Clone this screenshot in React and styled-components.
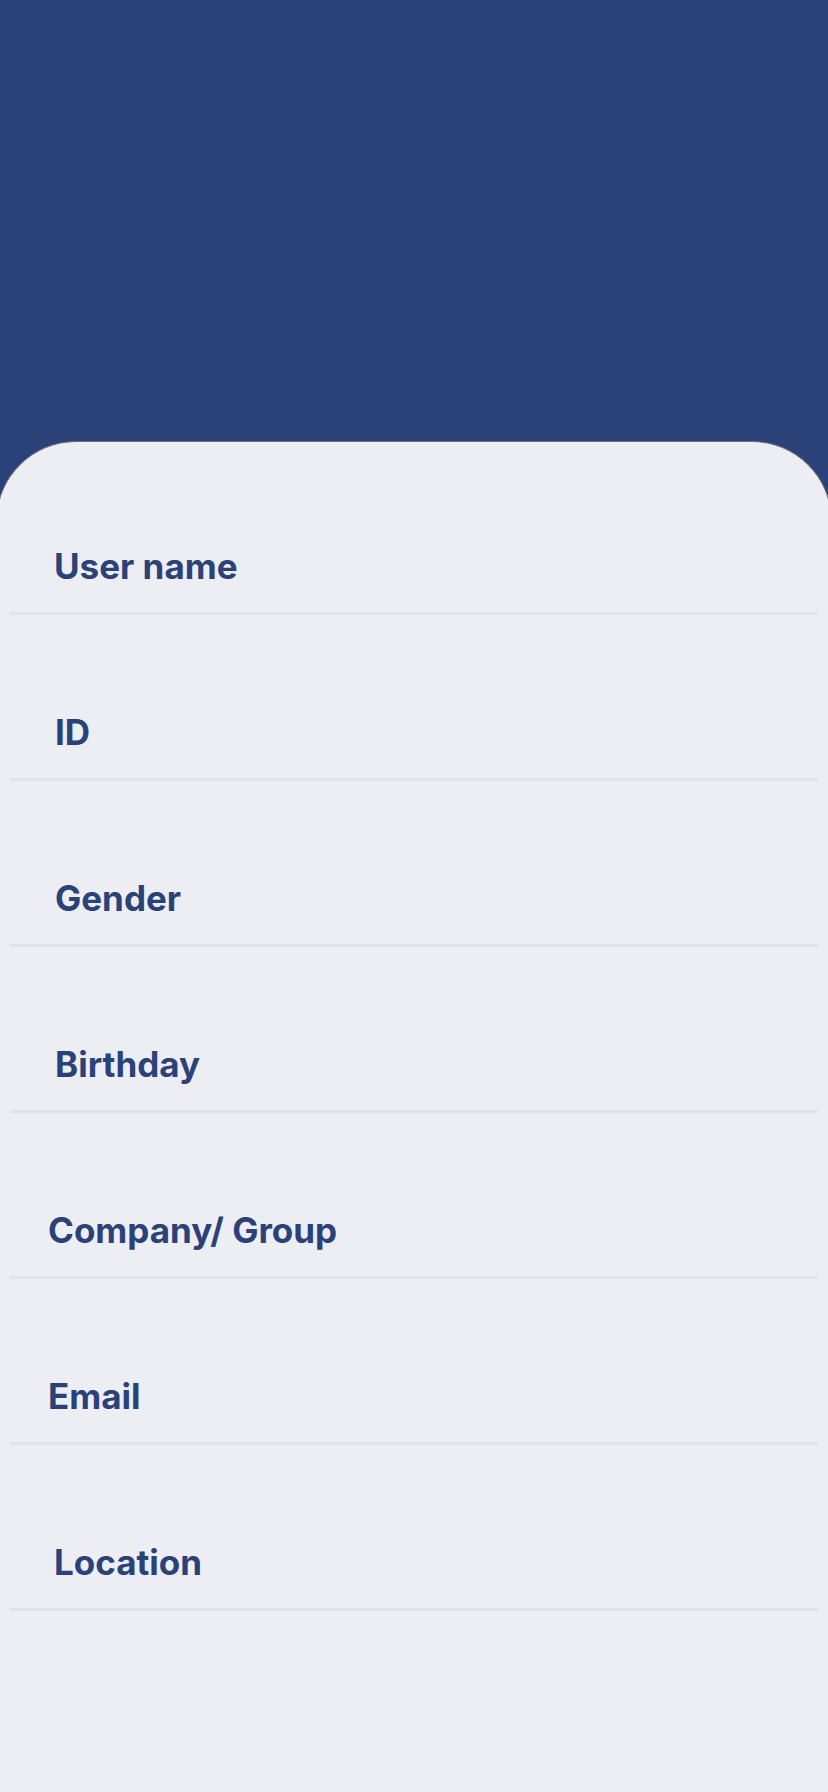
import React from 'react'
import styled, { createGlobalStyle } from 'styled-components'

const GlobalStyle = createGlobalStyle`
  html, body {
    margin: 0;
    padding: 0;
    background: #2b4279;
  }
  body {
    font-family: Inter, "Noto Sans", sans-serif;
    overflow-x: hidden;
  }
`

const Page = styled.div`
  min-height: 1792px;
  display: flex;
  flex-direction: column;
  background: #2b4279;
  overflow: hidden;
`

const Header = styled.div`
  height: 441px;
  flex-shrink: 0;
`

const Card = styled.div`
  flex: 1;
  margin: 0 -4px;
  padding: 7px 13px 0 13px;
  background: #edeef3;
  border: 1px solid #6c6f78;
  border-bottom: none;
  border-radius: 80px 80px 0 0;
`

const Field = styled.div`
  display: flex;
  flex-direction: column;
  padding-top: 97px;
`

const Label = styled.div`
  padding-left: ${p => p.indent}px;
  font-size: 35px;
  line-height: 40px;
  font-weight: 700;
  color: #2b4279;
  letter-spacing: 0;
`

const Divider = styled.div`
  margin-top: 26px;
  height: 3px;
  background: #e1e2e8;
`

const fields = [
  { label: 'User name', indent: 44 },
  { label: 'ID', indent: 45 },
  { label: 'Gender', indent: 45 },
  { label: 'Birthday', indent: 45 },
  { label: 'Company/ Group', indent: 38 },
  { label: 'Email', indent: 38 },
  { label: 'Location', indent: 44 },
]

const App = () => {
  return (
    <Page>
      <GlobalStyle />
      <Header />
      <Card>
        {fields.map(f => (
          <Field key={f.label}>
            <Label indent={f.indent}>{f.label}</Label>
            <Divider />
          </Field>
        ))}
      </Card>
    </Page>
  )
}

export default App
